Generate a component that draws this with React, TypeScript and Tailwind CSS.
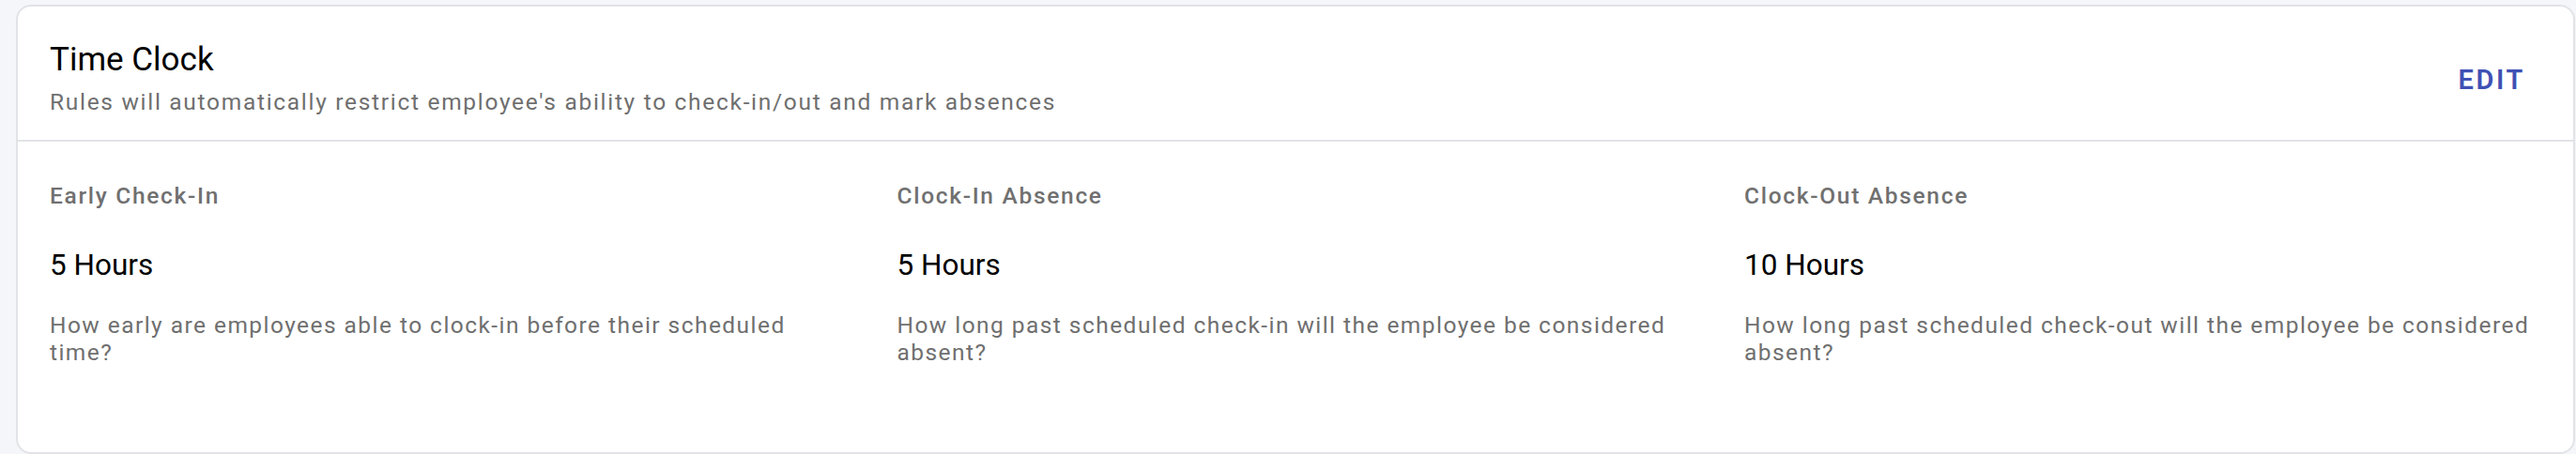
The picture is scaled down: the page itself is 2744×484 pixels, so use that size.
const rules = [
  {
    label: "Early Check-In",
    value: "5 Hours",
    help: "How early are employees able to clock-in before their scheduled time?",
  },
  {
    label: "Clock-In Absence",
    value: "5 Hours",
    help: "How long past scheduled check-in will the employee be considered absent?",
  },
  {
    label: "Clock-Out Absence",
    value: "10 Hours",
    help: "How long past scheduled check-out will the employee be considered absent?",
  },
];

export default function App() {
  return (
    <div className="w-[2744px] h-[484px] overflow-hidden bg-[#f5f6fa] pl-[17px] pt-[5px] pr-[1px] font-['Roboto','Liberation_Sans',sans-serif]">
      <div className="h-[479px] bg-white border-2 border-[#e2e3e7] rounded-[16px] flex flex-col">
        {/* header */}
        <div className="flex items-center justify-between border-b-2 border-[#e2e3e7] pl-[34px] pr-[37px] pt-[36px] pb-[22px]">
          <div>
            <h2 className="text-[35px] leading-[42px] font-normal text-black">Time Clock</h2>
            <p className="mt-[6px] text-[24.5px] leading-[36px] tracking-[1.7px] text-[#6f6f6f]">
              Rules will automatically restrict employee's ability to check-in/out and mark absences
            </p>
          </div>
          <button className="px-[14px] py-[8px] text-[29px] leading-[36px] font-semibold tracking-[0.09em] text-[#3f51b5] uppercase">
            Edit
          </button>
        </div>

        {/* rules */}
        <div className="grid grid-cols-[837px_837px_837px] gap-x-[65.5px] pl-[34px] pt-[40px]">
          {rules.map((r) => (
            <div key={r.label} className="flex flex-col">
              <div className="text-[24.5px] leading-[36px] font-medium tracking-[1.7px] text-[#707070]">
                {r.label}
              </div>
              <div className="mt-[38px] text-[31.5px] leading-[36px] text-black">{r.value}</div>
              <p className="mt-[31px] text-[24.5px] leading-[29px] tracking-[1.45px] text-[#6f6f6f]">{r.help}</p>
            </div>
          ))}
        </div>
      </div>
    </div>
  );
}
